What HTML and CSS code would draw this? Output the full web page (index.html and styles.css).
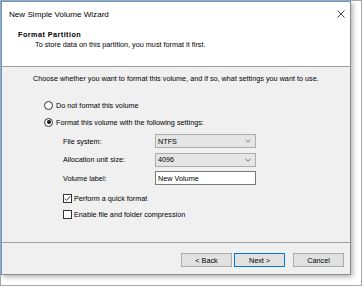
FILE: index.html
```html
<!DOCTYPE html>
<html lang="en">
<head>
    <meta charset="UTF-8">
    <title>New Simple Volume Wizard</title>
    <link rel="stylesheet" href="styles.css">
</head>
<body>
    <div class="window">
        <div class="titlebar">
            <span class="title">New Simple Volume Wizard</span>
            <svg class="close" width="8" height="8" viewBox="0 0 8 8">
                <path d="M0.5 0.5 L7.5 7.5 M7.5 0.5 L0.5 7.5" stroke="#333" stroke-width="0.9" fill="none"/>
            </svg>
        </div>

        <div class="header">
            <div class="heading">Format Partition</div>
            <div class="subheading">To store data on this partition, you must format it first.</div>
        </div>

        <div class="content">
            <p class="intro">Choose whether you want to format this volume, and if so, what settings you want to use.</p>

            <div class="options">
                <div class="option first">
                    <span class="radio"></span>
                    <span>Do not format this volume</span>
                </div>
                <div class="option">
                    <span class="radio checked"></span>
                    <span>Format this volume with the following settings:</span>
                </div>

                <div class="settings">
                    <span class="field-label">File system:</span>
                    <div class="select">
                        <span>NTFS</span>
                        <svg width="6" height="4" viewBox="0 0 6 4"><path d="M0.5 0.8 L3 3.2 L5.5 0.8" stroke="#555" stroke-width="0.8" fill="none"/></svg>
                    </div>

                    <span class="field-label">Allocation unit size:</span>
                    <div class="select">
                        <span>4096</span>
                        <svg width="6" height="4" viewBox="0 0 6 4"><path d="M0.5 0.8 L3 3.2 L5.5 0.8" stroke="#555" stroke-width="0.8" fill="none"/></svg>
                    </div>

                    <span class="field-label">Volume label:</span>
                    <div class="textbox">New Volume</div>
                </div>

                <div class="option check quick">
                    <span class="checkbox">
                        <svg width="7" height="7" viewBox="0 0 7 7"><path d="M0.8 3.6 L2.6 5.4 L6.2 1.2" stroke="#222" stroke-width="0.9" fill="none"/></svg>
                    </span>
                    <span>Perform a quick format</span>
                </div>
                <div class="option check">
                    <span class="checkbox"></span>
                    <span>Enable file and folder compression</span>
                </div>
            </div>
        </div>

        <div class="footer">
            <button class="btn">&lt; Back</button>
            <button class="btn default">Next &gt;</button>
            <button class="btn cancel">Cancel</button>
        </div>
    </div>
</body>
</html>
```

FILE: styles.css
```css
body {
    margin: 0;
    width: 362px;
    height: 286px;
    box-sizing: border-box;
    border: 1px solid #a6a6a6;
    background: #fff;
    font-family: 'Liberation Sans', Arial, sans-serif;
    font-size: 7.25px;
    color: #000;
    overflow: hidden;
}

.window {
    width: 350px;
    height: 274px;
    box-sizing: border-box;
    border-top: 1px solid #5a9bd8;
    border-left: 1px solid #5a9bd8;
    border-right: 1px solid #8c8c8c;
    border-bottom: 1px solid #8c8c8c;
    box-shadow: 2px 2px 5px rgba(0, 0, 0, 0.3);
    display: flex;
    flex-direction: column;
    background: #f0f0f0;
}

.titlebar {
    height: 24px;
    flex-shrink: 0;
    background: #fff;
    display: flex;
    align-items: center;
    justify-content: space-between;
    padding: 0 5px 0 7px;
}

.title {
    font-size: 8.1px;
}

.close {
    display: block;
}

.header {
    height: 41px;
    flex-shrink: 0;
    box-sizing: border-box;
    background: #fff;
    border-bottom: 1px solid #a0a0a0;
    padding: 4px 0 0 16px;
}

.heading {
    font-weight: bold;
    line-height: 10px;
    letter-spacing: 0.45px;
}

.subheading {
    line-height: 9px;
    padding-left: 17px;
}

.content {
    flex: 1;
    padding-top: 7px;
}

.intro {
    margin: 0 0 0 31px;
    line-height: 10px;
}

.options {
    margin: 15px 0 0 42px;
}

.option {
    display: flex;
    align-items: center;
    gap: 3px;
    height: 12px;
    margin-top: 5px;
}

.option.first {
    margin-top: 0;
}

.radio {
    width: 9px;
    height: 9px;
    box-sizing: border-box;
    border: 1px solid #333;
    border-radius: 50%;
    background: #fff;
    display: flex;
    align-items: center;
    justify-content: center;
}

.radio.checked::after {
    content: "";
    width: 4px;
    height: 4px;
    border-radius: 50%;
    background: #111;
}

.settings {
    display: grid;
    grid-template-columns: 92px 101px;
    grid-auto-rows: 14px;
    row-gap: 4.5px;
    margin: 6px 0 0 19px;
    align-items: center;
}

.select,
.textbox {
    height: 14px;
    box-sizing: border-box;
    display: flex;
    align-items: center;
    justify-content: space-between;
    padding: 0 4px 0 2px;
}

.select {
    background: #e5e5e5;
    border: 1px solid #adadad;
}

.textbox {
    background: #fff;
    border: 1px solid #7a7a7a;
}

.select svg {
    display: block;
}

.option.check {
    margin-left: 19px;
    gap: 2px;
    margin-top: 4px;
}

.option.quick {
    margin-top: 7px;
}

.checkbox {
    width: 9px;
    height: 9px;
    box-sizing: border-box;
    border: 1px solid #333;
    background: #fff;
    display: flex;
    align-items: center;
    justify-content: center;
}

.checkbox svg {
    display: block;
}

.footer {
    height: 32px;
    flex-shrink: 0;
    box-sizing: border-box;
    border-top: 1px solid #a0a0a0;
    display: flex;
    justify-content: flex-end;
    padding: 10px 6px 0 0;
}

.btn {
    width: 51px;
    height: 14px;
    margin: 0;
    padding: 0;
    box-sizing: border-box;
    background: #e1e1e1;
    border: 1px solid #adadad;
    font-family: inherit;
    font-size: 7.25px;
    color: #000;
}

.btn.default {
    margin-left: 2px;
    border-color: #0078d7;
}

.btn.cancel {
    margin-left: 8px;
}
```
